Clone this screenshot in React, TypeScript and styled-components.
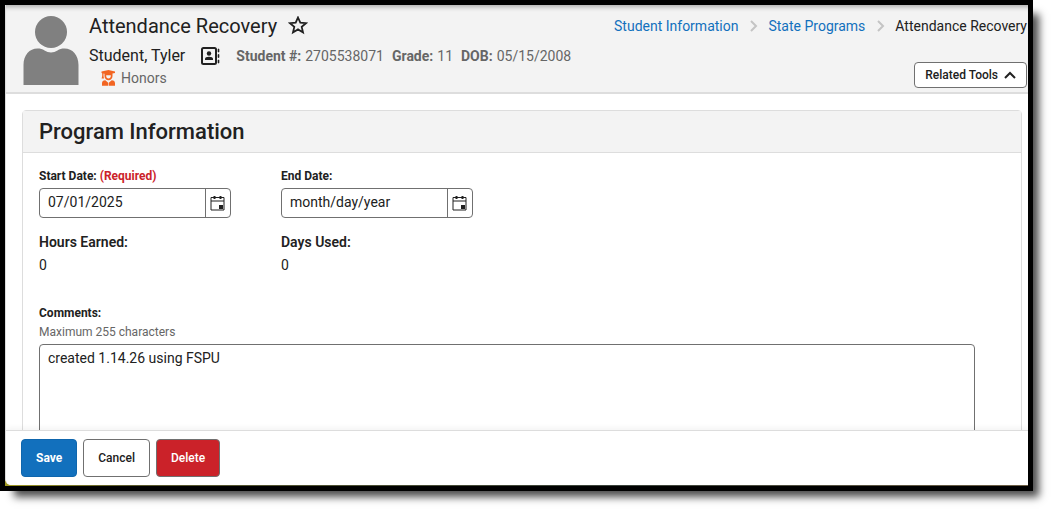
import React from "react";
import styled, { createGlobalStyle, css } from "styled-components";

const GlobalStyle = createGlobalStyle`
  *, *::before, *::after { box-sizing: border-box; }
  body {
    margin: 0;
    background: #fff;
    color: #212121;
    font: 14px/20px Roboto, "Liberation Sans", sans-serif;
  }
  h1, h2, p, dl, dd, ol { margin: 0; padding: 0; }
  button, input, textarea { font: inherit; color: inherit; }
  svg { display: block; flex: none; }
`;

const Page = styled.div`
  height: 100vh;
  padding: 0 25px 25px 0;
`;

const Frame = styled.div`
  height: 100%;
  border: 5px solid #000;
  background: linear-gradient(90deg, #a29a22, #5b5a2c 12%, #39423a 60%, #6d5f45);
  box-shadow: 10px 10px 8px -4px rgba(0, 0, 0, 0.7);
  padding-bottom: 1px;
`;

const Panel = styled.div`
  height: 100%;
  display: flex;
  flex-direction: column;
  overflow: hidden;
  background: #fff;
  border-left: 1px solid #ddd;
  border-radius: 0 0 0 6px;
`;

const Header = styled.header`
  display: flex;
  justify-content: space-between;
  flex: none;
  padding: 9px 1px 4px 17px;
  background: #f3f3f3;
  border-bottom: 2px solid #ddd;
  box-shadow: inset 0 6px 5px -4px rgba(0, 0, 0, 0.3);
`;

const Person = styled.div`
  display: flex;
  gap: 10px;
`;

const Avatar = styled.svg`
  margin-top: 2px;
`;

const TitleRow = styled.div`
  display: flex;
  align-items: center;
  gap: 11px;
  height: 24px;
`;

const Title = styled.h1`
  font-size: 20px;
  line-height: 24px;
  font-weight: 400;
`;

const IconButton = styled.button`
  display: grid;
  place-items: center;
  padding: 0;
  border: 0;
  background: none;
`;

const StudentRow = styled.div`
  display: flex;
  align-items: center;
  margin-top: 6px;
  height: 24px;
`;

const StudentName = styled.span`
  font-size: 16px;
  margin-right: 15px;
`;

const Facts = styled.dl`
  display: flex;
  gap: 8px;
  margin-left: 16px;
  color: #666;
`;

const Fact = styled.div`
  display: flex;
  gap: 4px;

  dt { font-weight: 700; }
`;

const Flag = styled.p`
  display: flex;
  align-items: center;
  gap: 5px;
  padding-left: 12px;
  color: #666;
`;

const HeaderSide = styled.div`
  display: flex;
  flex-direction: column;
  justify-content: space-between;
  align-items: flex-end;
`;

const Crumbs = styled.ol`
  display: flex;
  align-items: center;
  list-style: none;
  margin-top: 2px;

  li { display: flex; align-items: center; }
  a { color: #1270bd; text-decoration: none; }
  svg { margin: 0 9px 0 11px; }
`;

const Button = styled.button<{ $tone?: "primary" | "danger"; $compact?: boolean }>`
  display: inline-flex;
  align-items: center;
  justify-content: center;
  gap: 6px;
  height: 38px;
  padding: 0 14px;
  border: 1px solid #707070;
  border-radius: 4px;
  background: #fff;
  font-size: 12px;
  line-height: 18px;
  font-weight: 500;

  ${(p) => p.$compact && css`height: 26px; padding: 0 10px;`}
  ${(p) => p.$tone === "primary" && css`background: #1270bd; border-color: #0f66ad; color: #fff; font-weight: 700;`}
  ${(p) => p.$tone === "danger" && css`background: #cb2229; color: #fff;`}
`;

const Content = styled.main`
  flex: 1;
  min-height: 0;
  overflow: hidden;
  padding: 16px 6px 0 16px;
`;

const Card = styled.section`
  border: 1px solid #ddd;
  border-radius: 4px;
`;

const CardTitle = styled.h2`
  padding: 8px 16px;
  background: #f3f3f3;
  border-bottom: 1px solid #ddd;
  font-size: 22px;
  line-height: 25px;
  font-weight: 500;
`;

const CardBody = styled.div`
  padding: 14px 46px 16px 16px;
`;

const Columns = styled.div`
  display: grid;
  grid-template-columns: 192px 192px;
  column-gap: 50px;
  row-gap: 14px;
`;

const Field = styled.div`
  display: flex;
  flex-direction: column;
`;

const Label = styled.label`
  margin-bottom: 3px;
  font-size: 12px;
  line-height: 18px;
  font-weight: 700;

  em { font-style: normal; color: #cb2229; }
`;

const DateBox = styled.div`
  display: flex;
  height: 30px;
  border: 1px solid #707070;
  border-radius: 4px;

  input {
    flex: 1;
    min-width: 0;
    padding: 0 8px 2px;
    border: 0;
    background: none;
    outline: 0;
  }
  input::placeholder { color: #212121; opacity: 1; }
  button { width: 25px; border-left: 1px solid #707070; }
`;

const Reading = styled.dl`
  dt { font-weight: 600; }
  dd { margin-top: 3px; }
`;

const CommentsField = styled(Field)`
  margin-top: 29px;

  label { margin-bottom: 1px; }
  textarea {
    height: 120px;
    margin-top: 3px;
    padding: 3px 8px;
    border: 1px solid #707070;
    border-radius: 4px;
    resize: none;
    outline: 0;
  }
`;

const Hint = styled.p`
  font-size: 12px;
  line-height: 18px;
  color: #666;
`;

const ActionBar = styled.footer`
  display: flex;
  flex: none;
  gap: 6px;
  padding: 8px 15px;
  background: #fff;
  border-top: 1px solid #ddd;
  box-shadow: 0 -2px 6px rgba(0, 0, 0, 0.05);
`;

const ChevronRight = () => (
  <svg width="10" height="12" viewBox="0 0 10 12" fill="none" stroke="#c4c4c4" strokeWidth="2" aria-hidden="true">
    <path d="M2 1l5 5-5 5" />
  </svg>
);

const CalendarIcon = () => (
  <svg width="16" height="16" viewBox="0 0 16 16" aria-hidden="true">
    <path d="M1 2.500h13v12.500h-13zM1 6h13" fill="none" stroke="#212121" />
    <path d="M3.500 1h2v3h-2zM9.500 1h2v3h-2zM9 10h4v4H9z" fill="#212121" />
  </svg>
);

const DateField = ({ id, label, value, required }: { id: string; label: string; value?: string; required?: boolean }) => (
  <Field>
    <Label htmlFor={id}>
      {label} {required && <em>(Required)</em>}
    </Label>
    <DateBox>
      <input id={id} type="text" defaultValue={value} placeholder="month/day/year" />
      <IconButton type="button" aria-label="Open calendar">
        <CalendarIcon />
      </IconButton>
    </DateBox>
  </Field>
);

const facts = [
  ["Student #:", "2705538071"],
  ["Grade:", "11"],
  ["DOB:", "05/15/2008"],
];

export default function App() {
  return (
    <Page>
      <GlobalStyle />
      <Frame>
        <Panel>
          <Header>
            <Person>
              <Avatar width="56" height="69" viewBox="0 0 56 69" fill="#808080" aria-hidden="true">
                <circle cx="28" cy="16" r="16" />
                <path d="M0.500 69V49c0-10 6-16.500 14-16.500 3 0 5 .5 7 2 4 2.500 9 2.500 13 0 2-1.500 4-2 7-2 8 0 14 6.500 14 16.500v20z" />
              </Avatar>
              <div>
                <TitleRow>
                  <Title>Attendance Recovery</Title>
                  <IconButton type="button" aria-label="Add to favorites">
                    <svg width="20" height="20" viewBox="0 0 20 20" fill="none" stroke="#212121" strokeWidth="1.800" aria-hidden="true">
                      <path d="M10 1.500l2.300 5.200 5.700.5-4.300 3.700 1.300 5.500-5-3-5 3 1.300-5.500L2 7.200l5.700-.5z" />
                    </svg>
                  </IconButton>
                </TitleRow>
                <StudentRow>
                  <StudentName>Student, Tyler</StudentName>
                  <IconButton type="button" aria-label="Student contact card">
                    <svg width="20" height="20" viewBox="0 0 20 20" aria-hidden="true">
                      <rect x="2" y="2" width="14" height="16" rx="1.500" fill="none" stroke="#212121" strokeWidth="2" />
                      <circle cx="9" cy="7.500" r="2.200" fill="#212121" />
                      <path d="M5 14v-1c0-1.500 1.500-2.300 4-2.300s4 .8 4 2.300v1z" fill="#212121" />
                      <path d="M18 3h1v3h-1zM18 8.500h1v3h-1zM18 14h1v3h-1z" fill="#212121" stroke="#212121" strokeWidth=".6" />
                    </svg>
                  </IconButton>
                  <Facts>
                    {facts.map(([name, value]) => (
                      <Fact key={name}>
                        <dt>{name}</dt>
                        <dd>{value}</dd>
                      </Fact>
                    ))}
                  </Facts>
                </StudentRow>
                <Flag>
                  <svg width="15" height="16" viewBox="0 0 15 16" fill="#f26522" aria-hidden="true">
                    <path d="M.5 1.500L7.500 0l6.500 1.500V3l-2.500.6V6c0 2.500-1.700 4.200-4 4.200S3.500 8.500 3.500 6V3.800L2.500 3.600V6l.5 2.500H.6L1.200 6V3.200L.5 3zM5.200 5.300v.7c0 1.500.9 2.500 2.300 2.500S9.800 7.500 9.800 6v-.7z" fillRule="evenodd" />
                    <path d="M1 15.800v-2.500c0-2 1.200-3 3.300-3.100L7.200 12.700v3.100zM14 15.800v-2.500c0-2-1.200-3-3.300-3.100L7.800 12.700v3.100z" />
                  </svg>
                  Honors
                </Flag>
              </div>
            </Person>
            <HeaderSide>
              <nav aria-label="Breadcrumb">
                <Crumbs>
                  <li><a href="#student-information">Student Information</a><ChevronRight /></li>
                  <li><a href="#state-programs">State Programs</a><ChevronRight /></li>
                  <li aria-current="page">Attendance Recovery</li>
                </Crumbs>
              </nav>
              <Button type="button" $compact>
                Related Tools
                <svg width="12" height="8" viewBox="0 0 12 8" fill="none" stroke="#212121" strokeWidth="2" aria-hidden="true">
                  <path d="M1 7l5-5 5 5" />
                </svg>
              </Button>
            </HeaderSide>
          </Header>

          <Content>
            <Card>
              <CardTitle>Program Information</CardTitle>
              <CardBody>
                <Columns>
                  <DateField id="start-date" label="Start Date:" value="07/01/2025" required />
                  <DateField id="end-date" label="End Date:" />
                  <Reading>
                    <dt>Hours Earned:</dt>
                    <dd>0</dd>
                  </Reading>
                  <Reading>
                    <dt>Days Used:</dt>
                    <dd>0</dd>
                  </Reading>
                </Columns>
                <CommentsField>
                  <Label htmlFor="comments">Comments:</Label>
                  <Hint id="comments-hint">Maximum 255 characters</Hint>
                  <textarea id="comments" aria-describedby="comments-hint" maxLength={255} defaultValue="created 1.14.26 using FSPU" />
                </CommentsField>
              </CardBody>
            </Card>
          </Content>

          <ActionBar>
            <Button type="submit" $tone="primary">Save</Button>
            <Button type="button">Cancel</Button>
            <Button type="button" $tone="danger">Delete</Button>
          </ActionBar>
        </Panel>
      </Frame>
    </Page>
  );
}
